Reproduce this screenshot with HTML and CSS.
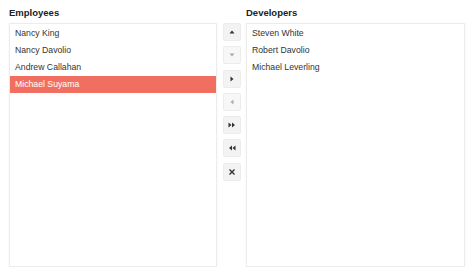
FILE: index.html
```html
<!DOCTYPE html>
<html lang="en">
<head>
  <meta charset="UTF-8" />
  <meta name="viewport" content="width=device-width, initial-scale=1.0"/>
  <title>Dual List Box</title>
  <link rel="stylesheet" href="styles.css">
</head>
<body>
  <div class="dual-list">
    <div class="list-column left">
      <div class="list-title">Employees</div>
      <ul class="list-box">
        <li>Nancy King</li>
        <li>Nancy Davolio</li>
        <li>Andrew Callahan</li>
        <li class="selected">Michael Suyama</li>
      </ul>
    </div>
    <div class="toolbar">
      <button class="tool-btn" title="Move up">
        <svg width="8" height="8" viewBox="0 0 8 8"><path d="M1.5 5.5 L4 2.5 L6.5 5.5 Z" fill="#333"/></svg>
      </button>
      <button class="tool-btn disabled" title="Move down">
        <svg width="8" height="8" viewBox="0 0 8 8"><path d="M1.5 2.5 L4 5.5 L6.5 2.5 Z" fill="#aaa"/></svg>
      </button>
      <button class="tool-btn" title="Move to">
        <svg width="8" height="8" viewBox="0 0 8 8"><path d="M2.5 1.5 L5.5 4 L2.5 6.5 Z" fill="#333"/></svg>
      </button>
      <button class="tool-btn disabled" title="Move from">
        <svg width="8" height="8" viewBox="0 0 8 8"><path d="M5.5 1.5 L2.5 4 L5.5 6.5 Z" fill="#aaa"/></svg>
      </button>
      <button class="tool-btn" title="Move all to">
        <svg width="10" height="8" viewBox="0 0 10 8"><path d="M1.5 1.5 L4.5 4 L1.5 6.5 Z M5 1.5 L8 4 L5 6.5 Z" fill="#333"/></svg>
      </button>
      <button class="tool-btn" title="Move all from">
        <svg width="10" height="8" viewBox="0 0 10 8"><path d="M8.5 1.5 L5.5 4 L8.5 6.5 Z M5 1.5 L2 4 L5 6.5 Z" fill="#333"/></svg>
      </button>
      <button class="tool-btn" title="Remove">
        <svg width="8" height="8" viewBox="0 0 8 8"><path d="M1.5 1.5 L6.5 6.5 M6.5 1.5 L1.5 6.5" stroke="#333" stroke-width="1.4"/></svg>
      </button>
    </div>
    <div class="list-column right">
      <div class="list-title">Developers</div>
      <ul class="list-box">
        <li>Steven White</li>
        <li>Robert Davolio</li>
        <li>Michael Leverling</li>
      </ul>
    </div>
  </div>
</body>
</html>
```

FILE: styles.css
```css
body {
  margin: 0;
  font-family: "Liberation Sans", Arial, sans-serif;
  background-color: #fff;
  color: #333;
}
.dual-list {
  display: flex;
  padding: 7px 9px 0 9px;
  height: 260px;
}
.list-column {
  display: flex;
  flex-direction: column;
}
.list-column.left {
  width: 208px;
}
.list-column.right {
  width: 219px;
}
.list-title {
  font-size: 9.5px;
  font-weight: bold;
  color: #222;
  height: 16px;
  line-height: 12px;
}
.list-box {
  list-style: none;
  margin: 0;
  padding: 1px 0 0 0;
  height: 242px;
  border: 1px solid #ececec;
  box-shadow: 0 1px 2px rgba(0, 0, 0, 0.06);
  background: #fff;
}
.list-box li {
  height: 17px;
  line-height: 17px;
  font-size: 8.7px;
  color: #333;
  padding-left: 5px;
}
.list-box li.selected {
  background-color: #f16f60;
  color: #fff;
}
.toolbar {
  display: flex;
  flex-direction: column;
  gap: 5.3px;
  margin: 16px 5px 0 6px;
}
.tool-btn {
  width: 18px;
  height: 18px;
  padding: 0;
  border: 1px solid #ececec;
  border-radius: 2px;
  background-color: #f3f3f3;
  display: flex;
  align-items: center;
  justify-content: center;
  cursor: pointer;
}
.tool-btn.disabled {
  background-color: #f7f7f7;
  cursor: default;
}
```
